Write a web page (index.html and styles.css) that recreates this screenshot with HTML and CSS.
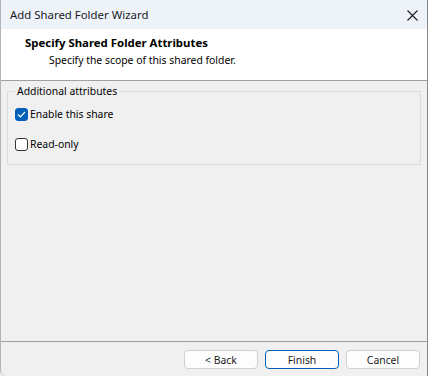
FILE: index.html
```html
<!DOCTYPE html>
<html lang="en">
<head>
    <meta charset="UTF-8">
    <title>Add Shared Folder Wizard</title>
    <link rel="stylesheet" href="styles.css">
</head>
<body>
    <div class="window">
        <div class="titlebar">
            <span class="title-text">Add Shared Folder Wizard</span>
            <span class="close-btn">
                <svg width="11" height="11" viewBox="0 0 11 11">
                    <path d="M0.5 0.5 L10.5 10.5 M10.5 0.5 L0.5 10.5" stroke="#1a1a1a" stroke-width="1.1" fill="none"/>
                </svg>
            </span>
        </div>
        <div class="header">
            <div class="header-title">Specify Shared Folder Attributes</div>
            <div class="header-sub">Specify the scope of this shared folder.</div>
        </div>
        <div class="content">
            <fieldset class="group">
                <legend>Additional attributes</legend>
                <label class="check-row">
                    <span class="box checked">
                        <svg width="9" height="7" viewBox="0 0 9 7">
                            <path d="M1 3.5 L3.3 5.8 L8 1" stroke="#fff" stroke-width="1.2" fill="none"/>
                        </svg>
                    </span>
                    Enable this share
                </label>
                <label class="check-row">
                    <span class="box"></span>
                    Read-only
                </label>
            </fieldset>
        </div>
        <div class="footer">
            <button class="btn">&lt; Back</button>
            <button class="btn default">Finish</button>
            <button class="btn">Cancel</button>
        </div>
    </div>
</body>
</html>
```

FILE: styles.css
```css
html, body {
    margin: 0;
    padding: 0;
}
body {
    font-family: "Noto Sans", "Open Sans", sans-serif;
    font-size: 10.4px;
    color: #000;
    background: #f0f0f0;
}
.window {
    width: 428px;
    height: 376px;
    box-sizing: border-box;
    border-left: 1px solid #b4b4b4;
    border-right: 1px solid #8a8a8a;
    border-bottom-left-radius: 6px;
    display: flex;
    flex-direction: column;
    background: #f0f0f0;
    overflow: hidden;
}
.titlebar {
    height: 29px;
    background: #eef3fa;
    display: flex;
    align-items: center;
    justify-content: space-between;
    padding-left: 9px;
    flex-shrink: 0;
}
.title-text {
    font-size: 11.4px;
    color: #1a1a1a;
}
.close-btn {
    display: flex;
    align-items: center;
    padding-right: 9px;
    padding-top: 1px;
}
.header {
    background: #fff;
    height: 51px;
    border-bottom: 1px solid #a0a0a0;
    padding-left: 24px;
    flex-shrink: 0;
}
.header-title {
    font-size: 11.4px;
    font-weight: bold;
    margin-top: 6px;
    line-height: 16px;
}
.header-sub {
    padding-left: 24px;
    line-height: 17px;
    margin-top: 1px;
}
.content {
    flex: 1;
    padding: 3px 6px 0 6px;
    border-bottom: 1px solid #a0a0a0;
}
.group {
    margin: 0;
    border: 1px solid #dcdcdc;
    padding: 3px 7px 8px 7px;
    height: 68px;
}
.group legend {
    padding: 0 2px;
    margin-left: 0;
    line-height: 14px;
}
.check-row {
    display: flex;
    align-items: center;
    gap: 2px;
    height: 14px;
    margin-top: 6px;
}
.check-row + .check-row {
    margin-top: 16px;
}
.box {
    width: 11px;
    height: 11px;
    border: 1px solid #333;
    border-radius: 3px;
    background: #fff;
    display: flex;
    align-items: center;
    justify-content: center;
}
.box.checked {
    background: #005fb8;
    border-color: #005fb8;
}
.footer {
    height: 34px;
    box-sizing: border-box;
    display: flex;
    justify-content: flex-end;
    align-items: flex-start;
    gap: 7px;
    padding: 8px 7px 0 0;
    flex-shrink: 0;
}
.btn {
    font-family: inherit;
    font-size: 10.4px;
    width: 74px;
    height: 19px;
    background: #fdfdfd;
    border: 1px solid #d0d0d0;
    border-radius: 4px;
    padding: 0;
    color: #1a1a1a;
}
.btn.default {
    border: 1px solid #005fb8;
}
```
